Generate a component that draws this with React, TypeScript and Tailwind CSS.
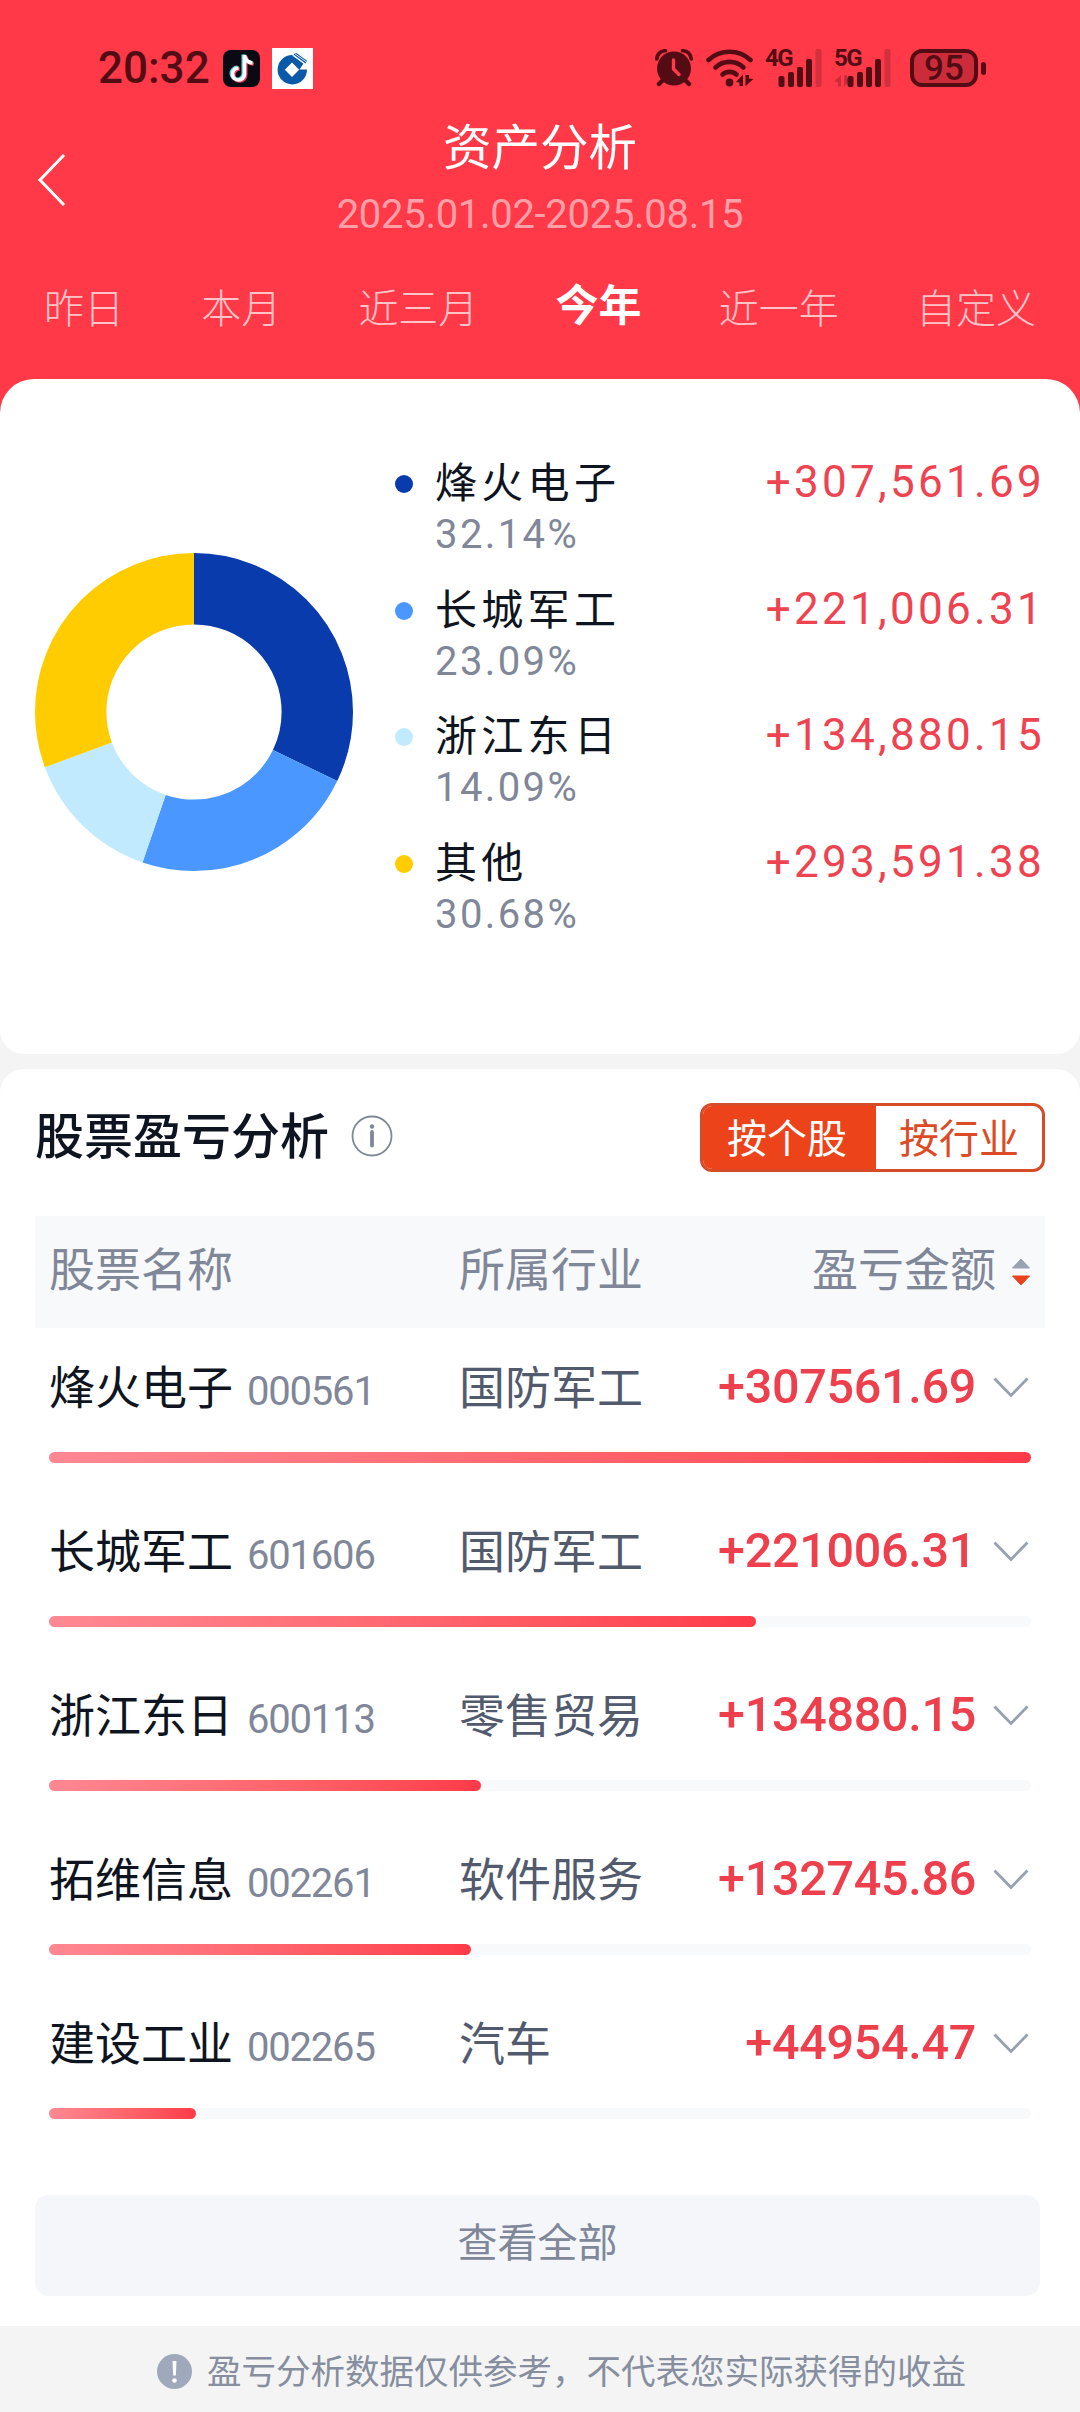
const tabs = ["昨日", "本月", "近三月", "今年", "近一年", "自定义"];

const holdings = [
  { name: "烽火电子", pct: 32.14, amount: "+307,561.69", color: "#093bad" },
  { name: "长城军工", pct: 23.09, amount: "+221,006.31", color: "#4a98ff" },
  { name: "浙江东日", pct: 14.09, amount: "+134,880.15", color: "#c2eaff" },
  { name: "其他", pct: 30.68, amount: "+293,591.38", color: "#ffcc01" },
];

const stocks = [
  { name: "烽火电子", code: "000561", industry: "国防军工", amount: "+307561.69", width: 100 },
  { name: "长城军工", code: "601606", industry: "国防军工", amount: "+221006.31", width: 72 },
  { name: "浙江东日", code: "600113", industry: "零售贸易", amount: "+134880.15", width: 44 },
  { name: "拓维信息", code: "002261", industry: "软件服务", amount: "+132745.86", width: 43 },
  { name: "建设工业", code: "002265", industry: "汽车", amount: "+44954.47", width: 15 },
];

function TikTokIcon() {
  const note = "M21.5 5V24A6 6 0 1 1 15.5 18M21.5 5C22 9.5 25 12.5 29.5 13";
  return (
    <svg className="w-[37px] h-[37px]" viewBox="0 0 37 37" fill="none">
      <rect width="37" height="37" rx="8" fill="#0b0a14" />
      <g strokeWidth="3.6">
        <path d={note} stroke="#52d6d8" transform="translate(-1.2 -0.6)" />
        <path d={note} stroke="#f0415c" transform="translate(1.2 1)" />
        <path d={note} stroke="#fff" />
      </g>
    </svg>
  );
}

function BankIcon() {
  return (
    <svg className="w-[41px] h-[41px]" viewBox="0 0 41 41">
      <rect width="41" height="41" fill="#fff" />
      <path d="M20.5 7A14.700 14.700 0 1 0 35 21.500H27.500L31.500 15.500Z" fill="#0a5aa8" />
      <path d="M20 14.500L27.200 21.700L20 28.900L12.800 21.700Z" fill="#fff" />
      <path d="M21.500 6.500L24 4.700L35 12.700L33.500 15.500Z" fill="#0a5aa8" />
      <path d="M20.500 7.300L33.500 16.500M23 5.800L34.500 14" stroke="#fff" strokeWidth="0.9" />
    </svg>
  );
}

function AlarmIcon() {
  return (
    <svg className="w-[38px] h-[38px]" viewBox="0 0 38 38" fill="none">
      <path d="M9 30L4 35M29 30L34 35" stroke="#540c14" strokeWidth="4.5" strokeLinecap="round" />
      <circle cx="19" cy="19.500" r="17" fill="#540c14" />
      <path d="M1.800 10C2 5 6 1.500 10.500 1.800M36.200 10C36 5 32 1.500 27.500 1.800" stroke="#540c14" strokeWidth="3.600" strokeLinecap="round" />
      <path d="M18.500 11V20L24 25.500" stroke="#ff3a49" strokeWidth="3.400" strokeLinecap="round" strokeLinejoin="round" />
    </svg>
  );
}

function WifiIcon() {
  return (
    <svg className="w-[48px] h-[38px]" viewBox="0 0 48 38" fill="none">
      <g stroke="#540c14" strokeWidth="4.600" strokeLinecap="round">
        <path d="M2.500 11C14 0 33 0 44.500 11" />
        <path d="M9.500 18.500C17.500 11 29.500 11 37.500 18.500" />
        <path d="M16.500 25.500C20.500 22 26.500 22 30.500 25.500" />
      </g>
      <circle cx="23.500" cy="33.500" r="3.900" fill="#540c14" />
      <path d="M37 25.500V37H33.500V33.500L30 33ZM39.500 37V26H43V29.500L47.500 30Z" fill="#540c14" />
    </svg>
  );
}

function SignalIcon({ label, arrows = false }: { label: string; arrows?: boolean }) {
  return (
    <div className="relative w-[62px] h-[38px]">
      <svg className="w-[62px] h-[38px]" viewBox="0 0 62 38">
        {arrows && <path d="M7 26V37.500H4V33L0 32.500ZM10 37.500V26H13V30L17.500 30.500Z" fill="#cc2c3a" />}
        <g fill="#540c14">
          <rect x="13.500" y="27" width="6" height="11" rx="2" />
          <rect x="23" y="23" width="6" height="15" rx="2" />
          <rect x="32" y="18" width="6" height="20" rx="2" />
          <rect x="41" y="10" width="6" height="28" rx="2" />
          <rect x="50.500" y="0" width="6" height="38" rx="2" fill="#d42f3d" />
        </g>
      </svg>
      <span className="absolute left-0 -top-[3px] text-[24px] leading-[25px] tracking-[-1.500px] font-bold">{label}</span>
    </div>
  );
}

function StatusBar() {
  return (
    <div className="h-[112px] pt-[24px] pl-[98px] pr-[94px] flex items-center text-[#540c14]">
      <span className="w-[125px] text-[44px] leading-none font-medium">20:32</span>
      <TikTokIcon />
      <div className="ml-[12px]">
        <BankIcon />
      </div>
      <div className="ml-auto flex items-center">
        <AlarmIcon />
        <div className="ml-[13px]">
          <WifiIcon />
        </div>
        <div className="ml-[11px]">
          <SignalIcon label="4G" />
        </div>
        <div className="ml-[7px] mr-[14px]">
          <SignalIcon label="5G" arrows />
        </div>
        <div className="w-[68px] h-[38px] border-[4px] border-[#540c14] rounded-[12px] bg-[#cc2c3a] flex items-center justify-center text-[35px] leading-none font-medium">
          95
        </div>
        <div className="ml-[3px] w-[5px] h-[13px] rounded-[3px] bg-[#540c14]" />
      </div>
    </div>
  );
}

function Header() {
  return (
    <header className="h-[440px] bg-[#ff3948] text-white">
      <StatusBar />
      <div className="h-[136px] grid grid-cols-[120px_1fr_120px] items-center">
        <svg className="ml-[36px] w-[30px] h-[54px]" viewBox="0 0 30 54" fill="none">
          <path d="M28 2L4 27L28 52" stroke="#fff" strokeWidth="3" />
        </svg>
        <div className="pt-[3px] text-center">
          <h1 className="text-[48.500px] leading-[66px]">资产分析</h1>
          <p className="text-[40px] leading-[66px] tracking-[-0.300px] text-[#ffa0a8]">2025.01.02-2025.08.15</p>
        </div>
      </div>
      <nav className="h-[121px] pt-[2px] px-[44px] flex items-center justify-between">
        {tabs.map((tab) =>
          tab === "今年" ? (
            <span key={tab} className="text-[43px] leading-none font-bold pb-[6px]">{tab}</span>
          ) : (
            <span key={tab} className="text-[40px] leading-none font-light text-[#ffc4c8]">{tab}</span>
          )
        )}
      </nav>
    </header>
  );
}

function Donut() {
  const r = 123.3;
  const total = 2 * Math.PI * r;
  let offset = 0;

  return (
    <svg className="w-[318px] h-[318px] -rotate-90" viewBox="0 0 318 318" fill="none">
      {holdings.map((h) => {
        const start = offset;
        const len = (h.pct / 100) * total;
        offset += len;
        return (
          <circle
            key={h.name}
            cx="159"
            cy="159"
            r={r}
            stroke={h.color}
            strokeWidth="71.4"
            strokeDasharray={`${len} ${total - len}`}
            strokeDashoffset={-start}
          />
        );
      })}
    </svg>
  );
}

function Overview() {
  return (
    <section className="relative -mt-[61px] h-[675px] pt-[74px] px-[35px] flex bg-white rounded-t-[34px] rounded-b-[24px]">
      <div className="w-[360px] pt-[100px]">
        <Donut />
      </div>
      <ul className="flex-1">
        {holdings.map((h) => (
          <li key={h.name} className="h-[126.600px] flex">
            <span className="mt-[22px] w-[18px] h-[18px] rounded-full" style={{ background: h.color }} />
            <div className="ml-[22px] pt-[3px]">
              <p className="text-[42px] leading-[56px] tracking-[4.300px] text-[#0e1420]">{h.name}</p>
              <p className="text-[40px] leading-[46px] tracking-[2.400px] text-[#7f8799]">{h.pct.toFixed(2)}%</p>
            </div>
            <span className="ml-auto text-[44px] leading-[59px] tracking-[3.300px] text-[#ee4350]">{h.amount}</span>
          </li>
        ))}
      </ul>
    </section>
  );
}

function StockRow({ stock }: { stock: (typeof stocks)[number] }) {
  return (
    <li className="h-[164px] px-[14px]">
      <div className="h-[119px] grid grid-cols-[410px_220px_1fr] items-center text-[46px] leading-none">
        <div className="flex items-center pt-[1px]">
          <span className="text-[#0e1420]">{stock.name}</span>
          <span className="ml-[14px] pt-[7px] text-[40px] tracking-[-1.200px] text-[#7f8799]">{stock.code}</span>
        </div>
        <span className="pt-[1px] text-[#525a6e]">{stock.industry}</span>
        <div className="flex items-center justify-end">
          <span className="text-[48.500px] tracking-[-0.300px] font-medium text-[#ee3f4d]">{stock.amount}</span>
          <svg className="ml-[17px] mr-[2px] w-[36px] h-[22px]" viewBox="0 0 36 22" fill="none">
            <path d="M1.500 1.500L18 18.500L34.500 1.500" stroke="#98a1b2" strokeWidth="2.800" />
          </svg>
        </div>
      </div>
      <div className="mt-[5px] h-[11px] rounded-full bg-[#f8f9fb]">
        <div
          className="h-full rounded-full bg-linear-to-r from-[#ff8892] to-[#ff3a49]"
          style={{ width: `${stock.width}%` }}
        />
      </div>
    </li>
  );
}

function StockAnalysis() {
  return (
    <section className="mt-[15px] h-[1257px] px-[35px] bg-white rounded-t-[24px]">
      <div className="pt-[34px] flex items-center">
        <h2 className="-mt-px text-[49px] leading-none font-medium text-[#0e1420]">股票盈亏分析</h2>
        <svg className="ml-[22px] -mt-[3px] w-[42px] h-[42px]" viewBox="0 0 42 42" fill="none">
          <circle cx="21" cy="21" r="19.500" stroke="#7f8799" strokeWidth="1.800" />
          <circle cx="21" cy="11.500" r="2.200" fill="#7f8799" />
          <path d="M21 17V30.500" stroke="#7f8799" strokeWidth="3.800" strokeLinecap="round" />
        </svg>
        <div className="ml-auto w-[345px] h-[69px] border-[3px] border-[#d64c29] rounded-[12px] overflow-hidden flex text-[40px] leading-[68px] text-center">
          <span className="w-[173px] pr-[5px] bg-[#ed431b] text-white">按个股</span>
          <span className="flex-1 text-[#dc4b26]">按行业</span>
        </div>
      </div>

      <div className="mt-[44px] h-[112px] pb-[5px] px-[14px] grid grid-cols-[410px_1fr_auto] items-center bg-[#f8f9fb] text-[46px] leading-none text-[#7f8799]">
        <span>股票名称</span>
        <span>所属行业</span>
        <span className="flex items-center">
          盈亏金额
          <svg className="ml-[15px] mt-[4px] w-[20px] h-[28px]" viewBox="0 0 20 28">
            <path d="M10 1L18.500 10H1.500Z" fill="#9aa2b3" stroke="#9aa2b3" strokeLinejoin="round" />
            <path d="M10 27L18.500 18H1.500Z" fill="#e8431d" stroke="#e8431d" strokeLinejoin="round" />
          </svg>
        </span>
      </div>

      <ul>
        {stocks.map((s) => (
          <StockRow key={s.code} stock={s} />
        ))}
      </ul>

      <button className="mt-[47px] w-[1005px] h-[101px] pb-[4px] rounded-[14px] bg-[#f4f6fa] text-[40px] leading-none text-[#7f8799]">
        查看全部
      </button>
    </section>
  );
}

export default function App() {
  return (
    <div className="w-[1080px] h-[2412px] overflow-hidden bg-[#f4f4f4] font-['Roboto','Noto_Sans_CJK_SC',sans-serif]">
      <Header />
      <Overview />
      <StockAnalysis />
      <footer className="h-[86px] pl-[157px] pt-[4px] flex items-center text-[34.500px] leading-none text-[#868e9f]">
        <svg className="mr-[15px] w-[35px] h-[35px]" viewBox="0 0 35 35">
          <circle cx="17.500" cy="17.500" r="17.500" fill="#a0a9bc" />
          <path d="M15.500 7H19.500L18.800 21.500H16.200Z" fill="#fff" />
          <circle cx="17.500" cy="26.500" r="2.300" fill="#fff" />
        </svg>
        <span className="pt-[3px]">盈亏分析数据仅供参考，不代表您实际获得的收益</span>
      </footer>
    </div>
  );
}
